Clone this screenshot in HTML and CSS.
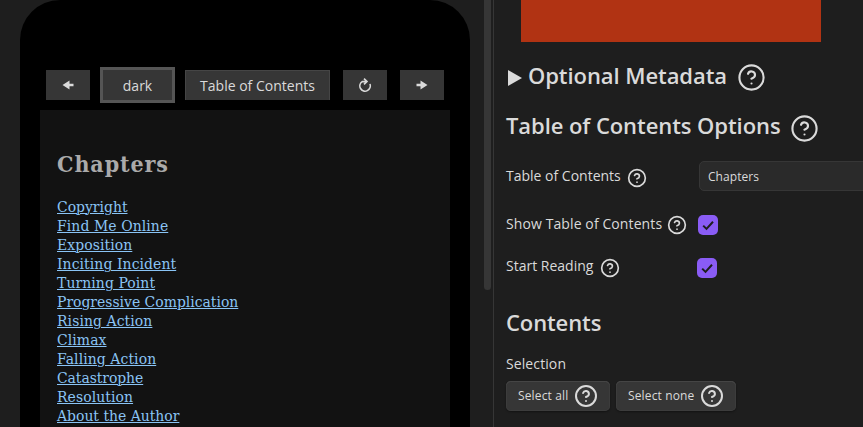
FILE: index.html
```html
<!DOCTYPE html>
<html lang="en">
<head>
<meta charset="utf-8">
<title>Book preview</title>
<link rel="stylesheet" href="styles.css">
</head>
<body>
<svg width="0" height="0" class="defs">
  <symbol id="help" viewBox="0 0 24 24">
    <circle cx="12" cy="12" r="10"/>
    <path d="M9.09 9a3 3 0 0 1 5.83 1c0 2-3 3-3 3"/>
    <path d="M12 17h.01"/>
  </symbol>
</svg>
<main class="app">
  <section class="preview">
    <div class="phone">
      <nav class="toolbar">
        <button class="tool"><svg class="arrow" viewBox="0 0 12 10"><path d="M.5 5 7.5.5V3.7H11.5V6.3H7.5V9.5z"/></svg></button>
        <button class="tool theme">dark</button>
        <button class="tool toc">Table of Contents</button>
        <button class="tool reload"><svg class="refresh" viewBox="0 0 14 14"><path d="M11.9 6A5.2 5.2 0 1 1 4.2 3.6H8.2M6 .6 9 3.6 6 6.4"/></svg></button>
        <button class="tool next"><svg class="arrow" viewBox="0 0 12 10"><path d="M11.5 5 4.5.5V3.7H.5V6.3H4.5V9.5z"/></svg></button>
      </nav>
      <article class="page">
        <h1>Chapters</h1>
        <ul>
          <li><a href="#">Copyright</a></li>
          <li><a class="wide" href="#">Find Me Online</a></li>
          <li><a class="wide" href="#">Exposition</a></li>
          <li><a class="wide" href="#">Inciting Incident</a></li>
          <li><a class="wide" href="#">Turning Point</a></li>
          <li><a href="#">Progressive Complication</a></li>
          <li><a class="wide" href="#">Rising Action</a></li>
          <li><a class="wide" href="#">Climax</a></li>
          <li><a class="wide" href="#">Falling Action</a></li>
          <li><a class="tight" href="#">Catastrophe</a></li>
          <li><a class="wide" href="#">Resolution</a></li>
          <li><a href="#">About the Author</a></li>
        </ul>
      </article>
    </div>
    <div class="scrollbar"></div>
  </section>
  <section class="settings">
    <div class="cover"></div>
    <h2 class="metadata"><svg class="marker" viewBox="0 0 14 16"><path d="M0 0 14 8 0 16z"/></svg>Optional Metadata<svg class="help large"><use href="#help"/></svg></h2>
    <h2 class="options">Table of Contents Options<svg class="help large"><use href="#help"/></svg></h2>
    <div class="row row-title"><label>Table of Contents<svg class="help"><use href="#help"/></svg></label><div class="field">Chapters</div></div>
    <div class="row row-show"><label>Show Table of Contents<svg class="help"><use href="#help"/></svg></label><span class="check"><svg viewBox="0 0 14 14"><path d="M2.2 7.6 5.5 10.9 12 3.8"/></svg></span></div>
    <div class="row row-start"><label>Start Reading<svg class="help"><use href="#help"/></svg></label><span class="check"><svg viewBox="0 0 14 14"><path d="M2.2 7.6 5.5 10.9 12 3.8"/></svg></span></div>
    <h2 class="contents">Contents</h2>
    <p>Selection</p>
    <div class="actions">
      <button class="select all">Select all<svg class="help"><use href="#help"/></svg></button>
      <button class="select none">Select none<svg class="help"><use href="#help"/></svg></button>
    </div>
  </section>
</main>
</body>
</html>
```
FILE: styles.css
```css
* { box-sizing: border-box; }
body { margin: 0; background: #1e1e1e; color: #dadada; font: 14px/20px "Open Sans", "Noto Sans", sans-serif; overflow: hidden; }
h1, h2, p, ul { margin: 0; padding: 0; }
button { font: inherit; color: inherit; border: 0; padding: 0; flex: none; }
svg { flex: none; display: block; }
.defs { position: absolute; }
.app { display: flex; height: 427px; }

.preview { display: flex; width: 493px; height: 427px; padding-left: 20px; flex: none; overflow: hidden; }
.phone { width: 450px; height: 800px; padding: 67px 20px 0; background: #000; border-radius: 40px; flex: none; }
.scrollbar { width: 7px; height: 290px; margin-left: 14px; background: #363636; border-radius: 0 0 4px 4px; }
.toolbar { display: flex; align-items: center; height: 36px; padding-left: 6px; }
.tool { display: flex; align-items: center; justify-content: center; width: 44px; height: 30px; background: #363636; }
.theme { width: 75px; height: 36px; margin-left: 10px; padding-top: 1px; border: 3px solid #555; }
.toc { width: 145px; margin-left: 10px; border: 1px solid #454545; border-bottom: 0; }
.reload, .next { margin-left: 13px; }
.arrow { width: 12px; height: 10px; fill: #dadada; }
.refresh { width: 14px; height: 14px; fill: none; stroke: #dadada; stroke-width: 1.6; }
.page { height: 600px; margin-top: 7px; padding: 38px 17px; background: #121212; font: 15.5px/19px "DejaVu Serif Condensed", "DejaVu Serif", serif; }
.page h1 { font-size: 23px; line-height: 32px; letter-spacing: .9px; color: #aaa; }
.page ul { list-style: none; margin-top: 18px; }
.page li { height: 19px; }
.page a { color: #8ac4f5; text-decoration-thickness: 1px; text-underline-offset: 1px; }
.wide { letter-spacing: .09px; }
.tight { letter-spacing: -.06px; }

.settings { flex: 1; height: 427px; padding-left: 12px; border-left: 1px solid #363636; overflow: hidden; }
.cover { width: 300px; height: 42px; margin-left: 15px; background: #b13313; }
h2 { display: flex; align-items: center; height: 30px; font-size: 22px; line-height: 30px; font-weight: 600; letter-spacing: -.07px; white-space: nowrap; }
.metadata { margin-top: 18px; padding-left: 2px; }
.options { margin-top: 20px; }
.contents { margin-top: 26px; letter-spacing: -.11px; }
.marker { width: 14px; height: 16px; margin: 5px 6px 0 0; fill: #dadada; }
.help { width: 20px; height: 20px; margin: 3px 0 0 6px; fill: none; stroke: #dadada; stroke-width: 2; stroke-linecap: round; stroke-linejoin: round; }
.help.large { width: 29px; height: 29px; margin: 5px 0 0 10px; stroke-width: 1.75; }
.options .help.large { margin: 7px 0 0 9px; }
.row { display: flex; align-items: center; height: 30px; }
.row label { display: flex; align-items: center; width: 193px; flex: none; white-space: nowrap; }
.row-title { margin-top: 21px; }
.row-show { margin-top: 18px; }
.row-show label { width: 192px; letter-spacing: .1px; }
.row-show .help { margin: 1px 0 0 5px; }
.row-start { margin-top: 12px; }
.row-start label { width: 191px; }
.row-start .help { margin-left: 7px; }
.row-start .check { margin-top: 4px; }
.field { width: 220px; height: 30px; flex: none; padding-left: 8px; border: 1px solid #363636; border-radius: 5px; background: #2a2a2a; font-size: 12px; line-height: 29px; letter-spacing: .05px; }
.check { display: flex; align-items: center; justify-content: center; width: 20px; height: 20px; margin-top: 2px; border-radius: 5px; background: #8a5cf5; }
.check svg { width: 14px; height: 14px; fill: none; stroke: #1e1e1e; stroke-width: 2; }
p { margin-top: 17px; letter-spacing: .1px; }
.actions { display: flex; gap: 6px; margin-top: 7px; }
.select { display: flex; align-items: center; height: 30px; padding-left: 12px; background: #363636; border-radius: 5px; font-size: 12px; letter-spacing: .14px; box-shadow: inset 0 1px #454545, inset 0 0 0 1px #3c3c3c, 0 1px 2px #0006; }
.select .help { width: 24px; height: 24px; margin: 0 0 0 6px; }
.all { width: 104px; }
.none { width: 120px; }
```
